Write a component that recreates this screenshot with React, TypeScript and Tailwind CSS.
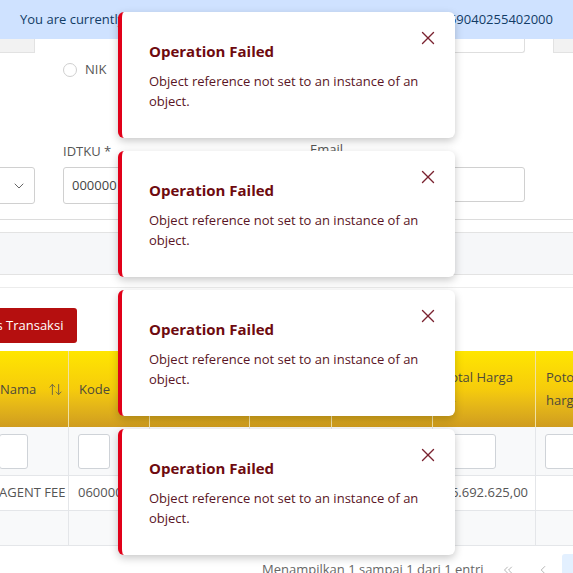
import React from 'react';
import { X, ChevronDown, ArrowUpDown, ArrowDown, ChevronsLeft, ChevronLeft } from 'lucide-react';

const toasts = [
  { id: 't1', title: 'Operation Failed', message: 'Object reference not set to an instance of an object.' },
  { id: 't2', title: 'Operation Failed', message: 'Object reference not set to an instance of an object.' },
  { id: 't3', title: 'Operation Failed', message: 'Object reference not set to an instance of an object.' },
  { id: 't4', title: 'Operation Failed', message: 'Object reference not set to an instance of an object.' },
];

const columns = [
  { id: 'nama', label: 'Nama', sort: 'both', input: 'w-[29px]', value: 'AGENT FEE', align: 'left' },
  { id: 'kode', label: 'Kode', sort: 'none', input: 'w-[32px]', value: '06000000', align: 'left' },
  { id: 'satuan', label: 'Satuan', sort: 'none', input: 'w-[60px]', value: 'Unit', align: 'left' },
  { id: 'qty', label: 'Qty', sort: 'none', input: 'w-[50px]', value: '1', align: 'right' },
  { id: 'harga', label: 'Harga Satuan', sort: 'none', input: 'w-[60px]', value: '16.692.625', align: 'right' },
  { id: 'total', label: 'Total Harga', sort: 'down', input: 'w-[54px]', value: '16.692.625,00', align: 'right' },
  { id: 'potongan', label: 'Potongan harga', sort: 'none', input: 'w-[60px]', value: '', align: 'right' },
];

const colWidths = 'grid grid-cols-[79px_81px_100px_82px_101px_103px_100px]';

export default function App() {
  return (
    <div className="relative w-[573px] h-[573px] overflow-hidden bg-white font-['Open_Sans',sans-serif] text-[13px] text-[#555]">
      {/* Info banner */}
      <div className="h-[39px] bg-[#cfe2ff] flex items-center justify-between px-[20px] text-[13px] text-[#123c66]">
        <span className="whitespace-nowrap">You are currently logged in as PT Sinar Abadi</span>
        <span className="whitespace-nowrap">NPWP 0059040255402000</span>
      </div>

      {/* Bottom edges of elements behind banner */}
      <div className="flex h-[14px]">
        <div className="w-[35px] bg-[#f2f2f2] border-b border-r border-[#e2e2e2]" />
        <div className="flex-1" />
        <div className="w-[215px] border-b border-r border-l border-[#dedede] rounded-b-[3px]" />
        <div className="w-[28px]" />
        <div className="w-[20px] bg-[#f2f2f2] border-b border-l border-[#e2e2e2]" />
      </div>

      {/* Form */}
      <div className="flex gap-[28px] ml-[-180px]">
        <div className="w-[215px] flex flex-col">
          <div className="h-[89px]" />
          <div className="h-[20px] mb-[5px] text-[13px] whitespace-nowrap">Jenis</div>
          <div className="h-[37px] border border-[#d0d0d0] rounded-[3px] flex items-center justify-end pr-[7px]">
            <ChevronDown size={16} strokeWidth={1.5} className="text-[#666]" />
          </div>
        </div>
        <div className="w-[219px] flex flex-col">
          <div className="h-[20px] mt-[7px] flex items-center gap-[8px]">
            <span className="w-[14px] h-[14px] rounded-full border border-[#cfcfcf] bg-white" />
            <span className="text-[13px] text-[#555]">NIK</span>
          </div>
          <div className="h-[62px]" />
          <div className="h-[20px] mb-[5px] text-[13px] text-[#555]">IDTKU *</div>
          <div className="h-[37px] border border-[#d0d0d0] rounded-[3px] flex items-center px-[8px] text-[13px] text-[#444]">
            000000
          </div>
        </div>
        <div className="w-[215px] flex flex-col">
          <div className="h-[87px]" />
          <div className="h-[20px] mb-[7px] text-[13px] text-[#555]">Email</div>
          <div className="h-[35px] border border-[#d0d0d0] rounded-[3px]" />
        </div>
      </div>

      <div className="mt-[15px] border-b border-[#dcdcdc]" />
      <div className="mt-[12px] h-[43px] bg-[#f6f7f9] border-y border-[#e3e3e3]" />
      <div className="mt-[12px] border-t border-[#ececec]" />

      {/* Action button */}
      <div className="mt-[20px] flex">
        <button className="ml-[-52px] h-[35px] px-[14px] rounded-[3px] bg-[#b50f0f] text-white text-[13px] whitespace-nowrap">
          Proses Transaksi
        </button>
      </div>

      {/* Table */}
      <div className="mt-[8px] ml-[-10px] w-[646px]">
        <div className={`${colWidths} h-[76px] bg-linear-to-b from-[#ffe600] via-[#f6cc0b] to-[#cf9c1f]`}>
          {columns.map((col) => (
            <div
              key={col.id}
              className="flex items-center pl-[10px] pr-[8px] border-r border-[#f1e1a2] text-[13px] leading-[23px] text-[#4e4a3a]"
            >
              {col.sort === 'both' ? (
                <span className="flex items-center gap-[12px]">
                  {col.label}
                  <ArrowUpDown size={15} strokeWidth={1.5} className="text-[#6a6448]" />
                </span>
              ) : col.sort === 'down' ? (
                <span>
                  {col.label}{' '}
                  <ArrowDown size={15} strokeWidth={1.5} className="inline text-[#6a6448]" />
                </span>
              ) : (
                <span>{col.label}</span>
              )}
            </div>
          ))}
        </div>
        {/* Filter row */}
        <div className={`${colWidths} h-[49px] bg-[#f8f9fa] border-b border-[#e4e6e9]`}>
          {columns.map((col) => (
            <div key={col.id} className="flex items-center pl-[9px] border-r border-[#e4e6e9]">
              <div className={`${col.input} h-[35px] bg-white border border-[#cfd3d8] rounded-[3px]`} />
            </div>
          ))}
        </div>
        {/* Data row */}
        <div className={`${colWidths} h-[35px] bg-white border-b border-[#e4e6e9]`}>
          {columns.map((col) => (
            <div
              key={col.id}
              className={`flex items-center pl-[9px] border-r border-[#e4e6e9] text-[13px] text-[#555] whitespace-nowrap overflow-hidden ${
                col.align === 'right' ? 'justify-end pr-[7px]' : 'pr-[4px]'
              }`}
            >
              {col.value}
            </div>
          ))}
        </div>
        {/* Empty row */}
        <div className={`${colWidths} h-[35px] bg-[#f8f9fa] border-b border-[#e4e6e9]`}>
          {columns.map((col) => (
            <div key={col.id} className="border-r border-[#e4e6e9]" />
          ))}
        </div>
      </div>

      {/* Pagination */}
      <div className="mt-[8px] pl-[262px] flex items-center h-[32px] w-[700px]">
        <span className="text-[13px] text-[#666] whitespace-nowrap">Menampilkan 1 sampai 1 dari 1 entri</span>
        <div className="ml-[8px] flex items-center gap-[3px]">
          <span className="w-[32px] h-[32px] flex items-center justify-center text-[#aaa]">
            <ChevronsLeft size={14} strokeWidth={1.5} />
          </span>
          <span className="w-[32px] h-[32px] flex items-center justify-center text-[#aaa]">
            <ChevronLeft size={14} strokeWidth={1.5} />
          </span>
          <span className="w-[32px] h-[32px] rounded-[3px] bg-[#e3f0ff] flex items-center justify-center text-[#1d4f91]">
            1
          </span>
        </div>
      </div>

      {/* Toast stack */}
      <div className="absolute left-[118px] top-[12px] w-[337px] flex flex-col gap-[13px]">
        {toasts.map((t) => (
          <div
            key={t.id}
            className="relative h-[126px] bg-white rounded-[6px] border-l-[4px] border-[#e10019] shadow-[0_3px_8px_rgba(0,0,0,0.22)] pt-[28px] pl-[27px] pr-[24px]"
          >
            <p className="text-[15px] font-bold leading-[22px] text-[#6e0a0f]">{t.title}</p>
            <p className="mt-[9px] text-[13px] leading-[20px] text-[#5a1525]">{t.message}</p>
            <button className="absolute right-[11px] top-[10px] w-[32px] h-[32px] flex items-center justify-center text-[#7a2230]">
              <X size={22} strokeWidth={1.5} />
            </button>
          </div>
        ))}
      </div>
    </div>
  );
}
